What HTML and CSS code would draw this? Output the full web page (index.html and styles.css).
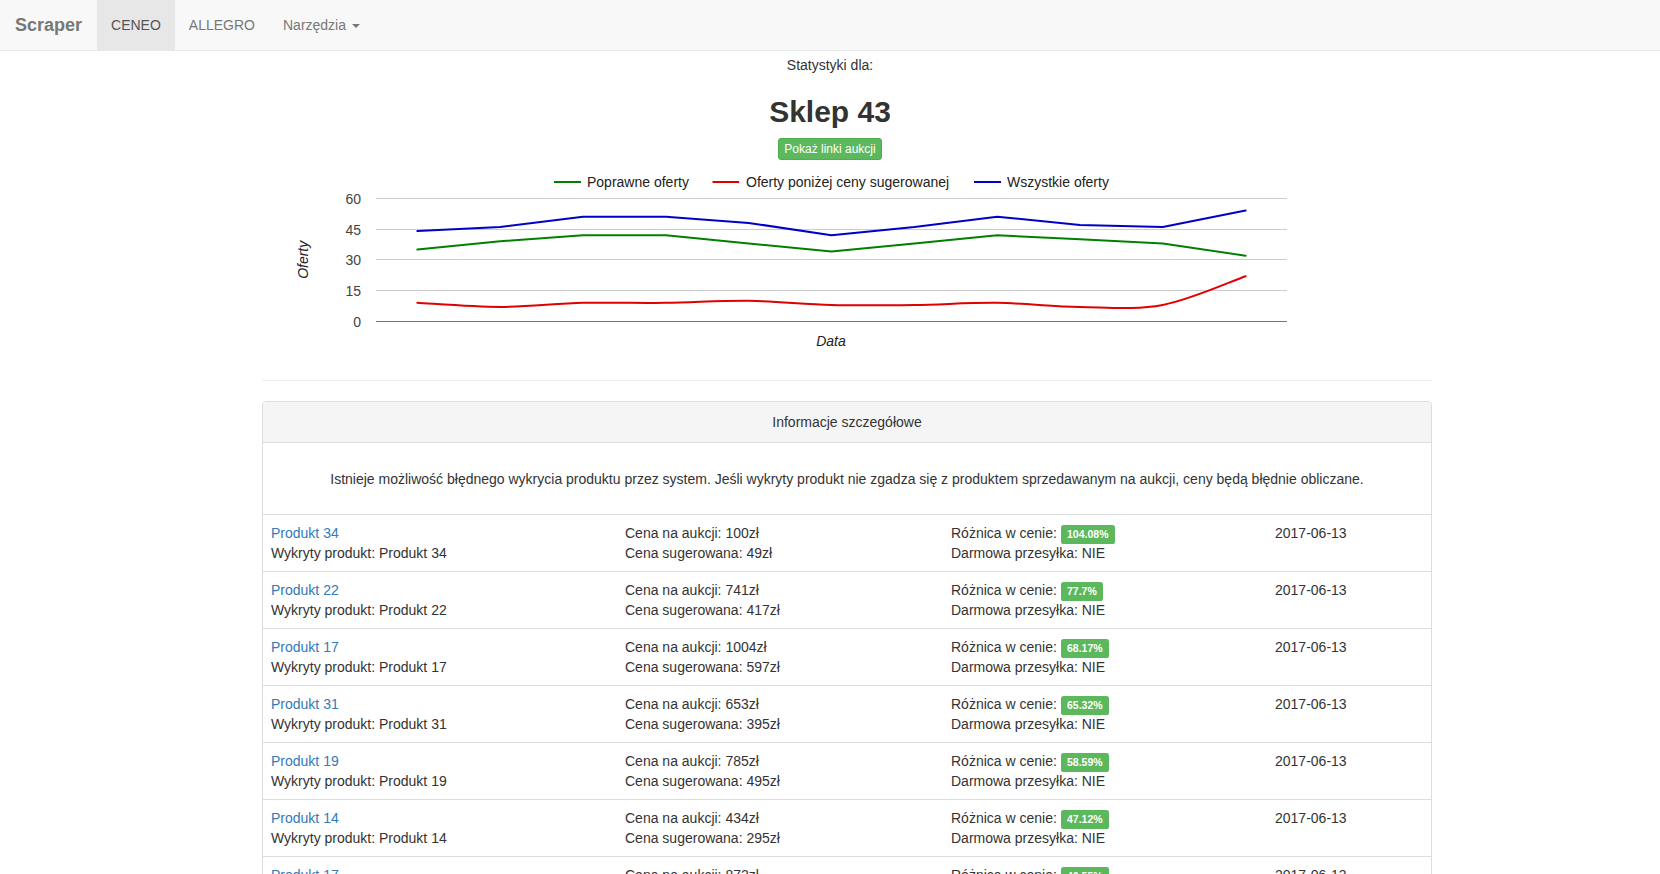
FILE: index.html
```html
<!DOCTYPE html>
<html lang="pl">
<head>
<meta charset="utf-8">
<title>Scraper</title>
<link rel="stylesheet" href="styles.css">
</head>
<body>
<nav class="navbar">
  <a class="navbar-brand" href="#">Scraper</a>
  <ul class="nav">
    <li class="nav-item active"><a href="#">CENEO</a></li>
    <li class="nav-item"><a href="#">ALLEGRO</a></li>
    <li class="nav-item"><a href="#">Narzędzia <span class="caret"></span></a></li>
  </ul>
</nav>

<main>
  <section class="stats">
    <p class="stats-label">Statystyki dla:</p>
    <h2 class="shop-name">Sklep 43</h2>
    <div class="actions"><button class="btn-success">Pokaż linki aukcji</button></div>
    <svg class="chart" width="1200" height="200" viewBox="0 0 1200 200">
      <g class="legend">
        <line x1="324" y1="22" x2="351" y2="22" stroke="#008000" stroke-width="2"/>
        <text x="357" y="27">Poprawne oferty</text>
        <line x1="482.5" y1="22" x2="509" y2="22" stroke="#e00000" stroke-width="2"/>
        <text x="516" y="27">Oferty poniżej ceny sugerowanej</text>
        <line x1="744" y1="22" x2="771" y2="22" stroke="#0000c8" stroke-width="2"/>
        <text x="777" y="27">Wszystkie oferty</text>
      </g>
      <g class="grid">
        <line x1="146" y1="38.5" x2="1057" y2="38.5"/>
        <line x1="146" y1="69.5" x2="1057" y2="69.5"/>
        <line x1="146" y1="99.5" x2="1057" y2="99.5"/>
        <line x1="146" y1="130.5" x2="1057" y2="130.5"/>
      </g>
      <line class="baseline" x1="146" y1="161.5" x2="1057" y2="161.5"/>
      <g class="ticks">
        <text x="131" y="43.5">60</text>
        <text x="131" y="74.5">45</text>
        <text x="131" y="104.5">30</text>
        <text x="131" y="135.5">15</text>
        <text x="131" y="166.5">0</text>
      </g>
      <text class="axis-title" transform="translate(78,99.8) rotate(-90)">Oferty</text>
      <text class="axis-title" x="601" y="186">Data</text>
      <polyline class="series" stroke="#0000c8" points="187.4,71.1 270.2,67 353,56.75 435.9,56.75 518.7,62.9 601.5,75.2 684.4,67 767.2,56.75 850,64.95 932.8,67 1015.6,50.6"/>
      <polyline class="series" stroke="#008000" points="187.4,89.55 270.2,81.35 353,75.2 435.9,75.2 518.7,83.4 601.5,91.6 684.4,83.4 767.2,75.2 850,79.3 932.8,83.4 1015.6,95.7"/>
      <path class="series" stroke="#e00000" d="M187.4,142.85 C201.2,143.53 242.6,146.95 270.2,146.95 C297.8,146.95 325.4,143.53 353,142.85 C380.6,142.17 408.3,143.19 435.9,142.85 C463.5,142.51 491.1,140.46 518.7,140.8 C546.3,141.14 573.9,144.22 601.5,144.9 C629.1,145.58 656.8,145.24 684.4,144.9 C712,144.56 739.6,142.51 767.2,142.85 C794.8,143.19 822.4,146.61 850,146.95 C877.6,147.29 905.2,150.03 932.8,144.9 C960.4,139.78 1001.8,120.98 1015.6,116.2"/>
    </svg>
  </section>

  <div class="content">
    <hr class="divider">
    <div class="panel">
      <div class="panel-heading">Informacje szczegółowe</div>
      <div class="panel-body">Istnieje możliwość błędnego wykrycia produktu przez system. Jeśli wykryty produkt nie zgadza się z produktem sprzedawanym na aukcji, ceny będą błędnie obliczane.</div>
      <table class="offers">
        <colgroup><col class="c1"><col class="c2"><col class="c3"><col class="c4"></colgroup>
        <tbody>
          <tr>
            <td><a href="#">Produkt 34</a><br>Wykryty produkt: Produkt 34</td>
            <td>Cena na aukcji: 100zł<br>Cena sugerowana: 49zł</td>
            <td>Różnica w cenie: <span class="label">104.08%</span><br>Darmowa przesyłka: NIE</td>
            <td>2017-06-13</td>
          </tr>
          <tr>
            <td><a href="#">Produkt 22</a><br>Wykryty produkt: Produkt 22</td>
            <td>Cena na aukcji: 741zł<br>Cena sugerowana: 417zł</td>
            <td>Różnica w cenie: <span class="label">77.7%</span><br>Darmowa przesyłka: NIE</td>
            <td>2017-06-13</td>
          </tr>
          <tr>
            <td><a href="#">Produkt 17</a><br>Wykryty produkt: Produkt 17</td>
            <td>Cena na aukcji: 1004zł<br>Cena sugerowana: 597zł</td>
            <td>Różnica w cenie: <span class="label">68.17%</span><br>Darmowa przesyłka: NIE</td>
            <td>2017-06-13</td>
          </tr>
          <tr>
            <td><a href="#">Produkt 31</a><br>Wykryty produkt: Produkt 31</td>
            <td>Cena na aukcji: 653zł<br>Cena sugerowana: 395zł</td>
            <td>Różnica w cenie: <span class="label">65.32%</span><br>Darmowa przesyłka: NIE</td>
            <td>2017-06-13</td>
          </tr>
          <tr>
            <td><a href="#">Produkt 19</a><br>Wykryty produkt: Produkt 19</td>
            <td>Cena na aukcji: 785zł<br>Cena sugerowana: 495zł</td>
            <td>Różnica w cenie: <span class="label">58.59%</span><br>Darmowa przesyłka: NIE</td>
            <td>2017-06-13</td>
          </tr>
          <tr>
            <td><a href="#">Produkt 14</a><br>Wykryty produkt: Produkt 14</td>
            <td>Cena na aukcji: 434zł<br>Cena sugerowana: 295zł</td>
            <td>Różnica w cenie: <span class="label">47.12%</span><br>Darmowa przesyłka: NIE</td>
            <td>2017-06-13</td>
          </tr>
          <tr>
            <td><a href="#">Produkt 17</a><br>Wykryty produkt: Produkt 17</td>
            <td>Cena na aukcji: 872zł<br>Cena sugerowana: 595zł</td>
            <td>Różnica w cenie: <span class="label">46.55%</span><br>Darmowa przesyłka: NIE</td>
            <td>2017-06-13</td>
          </tr>
        </tbody>
      </table>
    </div>
  </div>
</main>
</body>
</html>
```

FILE: styles.css
```css
* { box-sizing: border-box; }

html, body {
  margin: 0;
  padding: 0;
}

body {
  font-family: "Liberation Sans", Arial, Helvetica, sans-serif;
  font-size: 14px;
  line-height: 20px;
  color: #333;
  background: #fff;
}

a { color: #337ab7; text-decoration: none; }

/* Navbar */
.navbar {
  display: flex;
  align-items: stretch;
  height: 51px;
  background: #f8f8f8;
  border-bottom: 1px solid #e7e7e7;
}

.navbar-brand {
  display: block;
  padding: 15px;
  height: 50px;
  font-size: 18px;
  font-weight: bold;
  line-height: 20px;
  color: #777;
}

.nav {
  display: flex;
  margin: 0;
  padding: 0;
  list-style: none;
}

.nav-item a {
  display: block;
  padding: 15px 14px;
  height: 50px;
  line-height: 20px;
  color: #777;
}

.nav-item.active a {
  background: #e7e7e7;
  color: #555;
}

.caret {
  display: inline-block;
  width: 0;
  height: 0;
  margin-left: 2px;
  vertical-align: middle;
  border-top: 4px solid;
  border-right: 4px solid transparent;
  border-left: 4px solid transparent;
}

/* Stats header */
.stats {
  text-align: center;
}

.stats-label {
  margin: 4px 0 0;
}

.shop-name {
  margin: 20px 0 10px;
  font-size: 30px;
  line-height: 33px;
  font-weight: bold;
  color: #333;
}

.actions {
  display: flex;
  justify-content: center;
}

.btn-success {
  display: block;
  height: 22px;
  padding: 1px 5px;
  font-family: inherit;
  font-size: 12px;
  line-height: 18px;
  color: #fff;
  background: #5cb85c;
  border: 1px solid #4cae4c;
  border-radius: 3px;
}

.chart {
  display: block;
  margin: 0 auto;
  font-family: "Liberation Sans", Arial, sans-serif;
  font-size: 14px;
}

.legend text { fill: #222; }

.grid line {
  stroke: #cccccc;
  stroke-width: 1;
}

.baseline {
  stroke: #777;
  stroke-width: 1;
}

.ticks text {
  fill: #444;
  text-anchor: end;
}

.axis-title {
  fill: #222;
  font-style: italic;
  text-anchor: middle;
}

.series {
  fill: none;
  stroke-width: 2;
  stroke-linejoin: round;
  stroke-linecap: round;
}

/* Content */
.content {
  width: 1170px;
  margin-left: 262px;
}

.divider {
  height: 0;
  margin: 20px 0;
  border: 0;
  border-top: 1px solid #eee;
}

.panel {
  margin-bottom: 20px;
  background: #fff;
  border: 1px solid #ddd;
  border-radius: 4px;
  overflow: hidden;
}

.panel-heading {
  padding: 10px 15px;
  text-align: center;
  color: #333;
  background: #f5f5f5;
  border-bottom: 1px solid #ddd;
}

.panel-body {
  padding: 26px 15px 25px;
  text-align: center;
}

.offers {
  width: 100%;
  table-layout: fixed;
  border-collapse: collapse;
}

.offers col.c1 { width: 354px; }
.offers col.c2 { width: 326px; }
.offers col.c3 { width: 324px; }

.offers td {
  padding: 8px;
  vertical-align: top;
  border-top: 1px solid #ddd;
  text-align: left;
}

.label {
  display: inline;
  padding: .25em .6em .35em;
  font-size: 75%;
  font-weight: bold;
  line-height: 1;
  color: #fff;
  background: #5cb85c;
  border-radius: .25em;
  white-space: nowrap;
  vertical-align: baseline;
}
```
